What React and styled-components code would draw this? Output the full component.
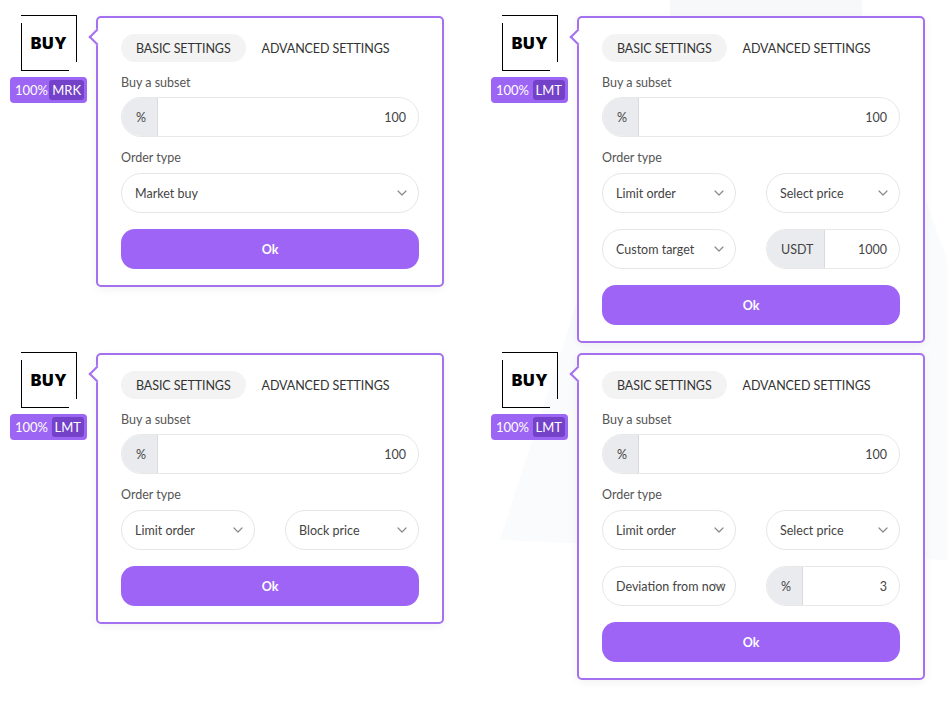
import React from 'react'
import styled, { createGlobalStyle } from 'styled-components'

const GlobalStyle = createGlobalStyle`
  body {
    margin: 0;
    background: #fff;
    font-family: Lato, "Noto Sans", sans-serif;
  }
`

const orders = [
  {
    tag: 'MRK',
    rows: [[{ type: 'select', text: 'Market buy' }]],
  },
  {
    tag: 'LMT',
    rows: [
      [{ type: 'select', text: 'Limit order' }, { type: 'select', text: 'Select price' }],
      [{ type: 'select', text: 'Custom target' }, { type: 'input', unit: 'USDT', value: '1000' }],
    ],
  },
  {
    tag: 'LMT',
    rows: [[{ type: 'select', text: 'Limit order' }, { type: 'select', text: 'Block price' }]],
  },
  {
    tag: 'LMT',
    rows: [
      [{ type: 'select', text: 'Limit order' }, { type: 'select', text: 'Select price' }],
      [{ type: 'select', text: 'Deviation from now' }, { type: 'input', unit: '%', value: '3' }],
    ],
  },
]

const Chevron = () => (
  <svg width="10" height="6" viewBox="0 0 10 6">
    <polyline points="1,1 5,5 9,1" fill="none" stroke="#8a8a8a" strokeWidth="1.2" strokeLinecap="round" strokeLinejoin="round" />
  </svg>
)

const Select = ({ text }) => (
  <SelectBox>
    <SelectText>{text}</SelectText>
    <ChevronSlot><Chevron /></ChevronSlot>
  </SelectBox>
)

const UnitInput = ({ unit, value }) => (
  <InputBox>
    <Addon>{unit}</Addon>
    <Value>{value}</Value>
  </InputBox>
)

const Field = (f) => (f.type === 'select' ? <Select text={f.text} /> : <UnitInput unit={f.unit} value={f.value} />)

const OrderCard = ({ tag, rows }) => (
  <Group>
    <Side>
      <BuyMark>BUY</BuyMark>
      <Badge>
        100%<Tag>{tag}</Tag>
      </Badge>
    </Side>
    <Panel>
      <Tabs>
        <Tab active>Basic settings</Tab>
        <Tab>Advanced settings</Tab>
      </Tabs>
      <Label>Buy a subset</Label>
      <UnitInput unit="%" value="100" />
      <Label>Order type</Label>
      <Rows>
        {rows.map((row, i) => (
          <Row key={i} cols={row.length}>
            {row.map((f, j) => <Field key={j} {...f} />)}
          </Row>
        ))}
        <OkButton>Ok</OkButton>
      </Rows>
    </Panel>
  </Group>
)

const App = () => {
  return (
    <>
      <GlobalStyle />
      <Page>
        <Watermark width="947" height="706" viewBox="0 0 947 706">
          <rect x="670" y="0" width="192" height="15" fill="#f6f8f9" />
          <polygon points="500,540 670,15 862,15 947,260 947,560" fill="#fafbfc" />
        </Watermark>
        {orders.map((o, i) => (
          <OrderCard key={i} {...o} />
        ))}
      </Page>
    </>
  )
}

const Page = styled.div`
  position: relative;
  display: grid;
  grid-template-columns: 434px 434px;
  column-gap: 47px;
  row-gap: 9px;
  align-items: start;
  align-content: start;
  padding: 15px 0 0 10px;
  min-height: 706px;
  box-sizing: border-box;
`
const Watermark = styled.svg`
  position: absolute;
  left: 0;
  top: 0;
  z-index: 0;
  pointer-events: none;
`
const Group = styled.div`
  position: relative;
  z-index: 1;
  display: flex;
  align-items: flex-start;
  gap: 9px;
`
const Side = styled.div`
  width: 77px;
  display: flex;
  flex-direction: column;
  align-items: center;
  gap: 6px;
`
const BuyMark = styled.div`
  position: relative;
  width: 56px;
  height: 56px;
  margin-left: 1px;
  display: flex;
  align-items: center;
  justify-content: center;
  font-family: Inter, "DejaVu Sans", sans-serif;
  font-weight: 900;
  font-size: 16px;
  letter-spacing: 0.6px;
  color: #000;
  &::before {
    content: '';
    position: absolute;
    top: 0;
    right: 0;
    width: 56px;
    height: 47px;
    border-top: 1px solid #000;
    border-right: 1px solid #000;
    box-sizing: border-box;
  }
  &::after {
    content: '';
    position: absolute;
    bottom: 0;
    left: 0;
    width: 48px;
    height: 48px;
    border-bottom: 1px solid #000;
    border-left: 1px solid #000;
    box-sizing: border-box;
  }
`
const Badge = styled.div`
  height: 26px;
  box-sizing: border-box;
  padding: 3px 3px 3px 5px;
  width: 77px;
  display: flex;
  align-items: center;
  justify-content: space-between;
  background: #9d65f3;
  border-radius: 4px;
  color: #fff;
  font-size: 13px;
`
const Tag = styled.span`
  display: flex;
  align-items: center;
  height: 20px;
  padding: 0 3px;
  border-radius: 3px;
  background: #7442c8;
`
const Panel = styled.div`
  position: relative;
  width: 348px;
  box-sizing: border-box;
  margin-top: 1px;
  padding: 16px 23px 16px;
  border: 2px solid #a470f0;
  border-radius: 5px;
  background: #fff;
  box-shadow: 0 2px 10px rgba(0, 0, 0, 0.06);
  &::before {
    content: '';
    position: absolute;
    left: -7px;
    top: 13px;
    width: 10px;
    height: 10px;
    background: #fff;
    border-left: 2px solid #a470f0;
    border-bottom: 2px solid #a470f0;
    transform: rotate(45deg);
  }
`
const Tabs = styled.div`
  display: flex;
  gap: 1px;
  margin-bottom: 14px;
`
const Tab = styled.div`
  height: 28px;
  display: flex;
  align-items: center;
  padding: 0 15px;
  border-radius: 14px;
  background: ${(p) => (p.active ? '#f3f3f4' : 'transparent')};
  color: #333;
  font-size: 12.5px;
  letter-spacing: -0.1px;
  white-space: nowrap;
  text-transform: uppercase;
`
const Label = styled.div`
  font-size: 12.5px;
  line-height: 14px;
  color: #555;
  margin: 0 0 7px;
  & + div + & {
    margin-top: 14px;
    margin-bottom: 8px;
  }
`
const Rows = styled.div`
  display: flex;
  flex-direction: column;
  gap: 16px;
`
const Row = styled.div`
  display: grid;
  grid-template-columns: ${(p) => (p.cols === 2 ? '134px 134px' : '1fr')};
  justify-content: space-between;
`
const SelectBox = styled.div`
  position: relative;
  height: 40px;
  box-sizing: border-box;
  display: flex;
  align-items: center;
  padding: 0 0 0 13px;
  border: 1px solid #e6e6e6;
  border-radius: 20px;
  background: #fff;
  overflow: hidden;
`
const SelectText = styled.span`
  font-size: 12.5px;
  color: #444;
  white-space: nowrap;
`
const ChevronSlot = styled.span`
  position: absolute;
  z-index: 1;
  right: 11px;
  top: 50%;
  margin-top: -3px;
  display: flex;
`
const InputBox = styled.div`
  height: 40px;
  box-sizing: border-box;
  display: flex;
  align-items: stretch;
  border: 1px solid #e8e8e8;
  border-radius: 20px;
  overflow: hidden;
  background: #fff;
`
const Addon = styled.span`
  display: flex;
  align-items: center;
  padding: 0 11px 0 14px;
  min-width: 35px;
  box-sizing: border-box;
  background: #e9ebee;
  border-right: 1px solid #d9dbde;
  font-size: 12.5px;
  color: #444;
`
const Value = styled.span`
  flex: 1;
  display: flex;
  align-items: center;
  justify-content: flex-end;
  padding-right: 12px;
  font-size: 12.5px;
  color: #444;
`
const OkButton = styled.button`
  height: 40px;
  border: none;
  border-radius: 14px;
  background: #9d64f6;
  color: #fff;
  font-family: inherit;
  font-weight: 700;
  font-size: 12.5px;
  cursor: pointer;
`

export default App
